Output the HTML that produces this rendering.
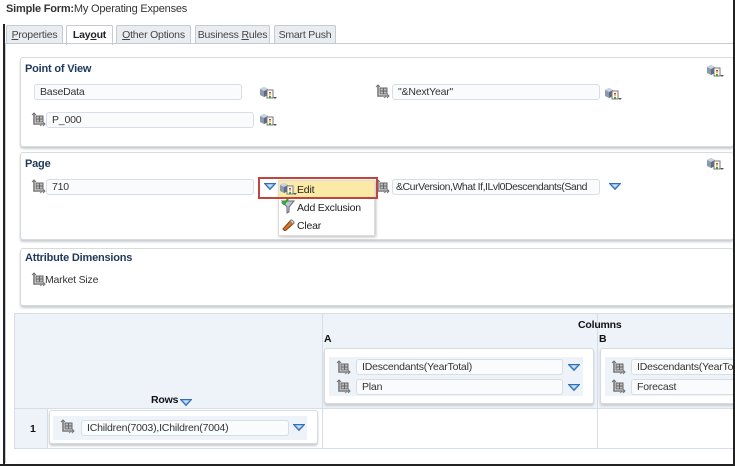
<!DOCTYPE html>
<html><head><meta charset="utf-8"><style>
*{margin:0;padding:0;box-sizing:border-box}
body{width:735px;height:466px;background:#fff;font-family:"Liberation Sans",Arial,sans-serif;font-size:10.5px;letter-spacing:-0.2px;color:#333;position:relative;overflow:hidden}
.a{position:absolute;white-space:nowrap}
.title{left:6px;top:3px;font-size:11px;color:#333}
.tab{top:25px;height:19px;border:1px solid #c5cbd3;border-bottom:none;background:#e9edf2;color:#444;padding:3px 0 0 0;text-align:center;border-radius:2px 2px 0 0}
.panel{border:1px solid #d6dbe0;border-radius:3px;background:#fff;box-shadow:0 2px 2px #c9ccd0}
.ph{font-weight:bold;color:#1d3a5b;font-size:11px}
.inp{height:16px;border:1px solid #d9dee4;border-radius:3px;background:#fafbfc;padding:1px 5px;color:#333;overflow:hidden}
</style></head><body>
<svg width="0" height="0" style="position:absolute">
<defs>
<g id="mem"><path d="M3 1v11h11" fill="none" stroke="#777" stroke-width="1.6"/><rect x="5" y="4" width="7" height="6" fill="#bbb" stroke="#666" stroke-width="1"/><path d="M5 7h7M8.5 4v6" stroke="#666"/><path d="M1 3l2-2 2 2M12 10l2 2-2 2" fill="none" stroke="#777"/><path d="M9 14l4-3" stroke="#888"/></g>
<g id="cube"><path d="M1 3l4-2 4 2v6l-4 2-4-2z" fill="#8a99ad"/><path d="M5 5v6l4-2V3z" fill="#5b6b80"/><path d="M1 3l4 2 4-2-4-2z" fill="#c9d3df"/><rect x="8" y="4" width="6" height="8" fill="#fff" stroke="#777"/><rect x="10" y="6" width="2" height="1.5" fill="#d33"/><rect x="10" y="8" width="2" height="1.5" fill="#ec3"/><rect x="10" y="10" width="2" height="1.5" fill="#3a3"/><path d="M14 11h4l-2 2z" fill="#555"/></g>
<g id="tri"><path d="M0.5 0.5h11l-5.5 6z" fill="#6fa6e0" stroke="#2d6fb8"/><path d="M3 1.5h6l-3 3z" fill="#cfe2f6"/></g>
</defs></svg>

<div class="a" style="left:3px;top:24px;width:2px;height:442px;background:#222"></div>
<div class="a title"><b>Simple Form:</b>My Operating Expenses</div>

<div class="a tab" style="left:6px;width:57px"><u>P</u>roperties</div>
<div class="a tab" style="left:66px;width:47px;background:#fff;font-weight:bold;color:#222;height:20px">Lay<u>o</u>ut</div>
<div class="a tab" style="left:116px;width:75px"><u>O</u>ther Options</div>
<div class="a tab" style="left:195px;width:75px">Business <u>R</u>ules</div>
<div class="a tab" style="left:274px;width:62px">Smart Push</div>
<div class="a" style="left:5px;top:43px;width:728px;height:1px;background:#c5cbd3"></div>
<div class="a" style="left:5px;top:43px;width:1px;height:420px;background:#c5cbd3"></div>

<!-- POV -->
<div class="a panel" style="left:20px;top:57px;width:714px;height:90px"></div>
<div class="a ph" style="left:25px;top:63px">Point of View</div>
<svg class="a" style="left:706px;top:64px" width="18" height="14"><use href="#cube"/></svg>
<div class="a inp" style="left:34px;top:84px;width:208px">BaseData</div>
<svg class="a" style="left:259px;top:86px" width="18" height="14"><use href="#cube"/></svg>
<svg class="a" style="left:375px;top:84px" width="16" height="16"><use href="#mem"/></svg>
<div class="a inp" style="left:392px;top:84px;width:208px">"&amp;NextYear"</div>
<svg class="a" style="left:604px;top:87px" width="18" height="14"><use href="#cube"/></svg>
<svg class="a" style="left:31px;top:112px" width="16" height="16"><use href="#mem"/></svg>
<div class="a inp" style="left:46px;top:112px;width:208px">P_000</div>
<svg class="a" style="left:259px;top:113px" width="18" height="14"><use href="#cube"/></svg>

<!-- Page -->
<div class="a panel" style="left:20px;top:152px;width:714px;height:88px"></div>
<div class="a ph" style="left:25px;top:158px">Page</div>
<svg class="a" style="left:706px;top:157px" width="18" height="14"><use href="#cube"/></svg>
<svg class="a" style="left:31px;top:179px" width="16" height="16"><use href="#mem"/></svg>
<div class="a inp" style="left:46px;top:179px;width:208px">710</div>
<svg class="a" style="left:264px;top:183px" width="12" height="8"><use href="#tri"/></svg>
<svg class="a" style="left:375px;top:179px" width="16" height="16"><use href="#mem"/></svg>
<div class="a inp" style="left:392px;top:179px;width:208px;padding-left:3px;letter-spacing:-0.45px">&amp;CurVersion,What If,ILvl0Descendants(Sand</div>
<svg class="a" style="left:609px;top:183px" width="12" height="8"><use href="#tri"/></svg>
<!-- menu -->
<div class="a" style="left:278px;top:180px;width:97px;height:56px;background:#fff;border:1px solid #dcdcdc;box-shadow:1px 1px 3px #bbb"></div>
<div class="a" style="left:279px;top:181px;width:95px;height:16px;background:#fbe9a6"></div>
<div class="a" style="left:258px;top:177px;width:120px;height:22px;border:2px solid #c0463c"></div>
<svg class="a" style="left:279px;top:182px" width="18" height="14"><use href="#cube"/></svg>
<div class="a" style="left:297px;top:184px;color:#222">Edit</div>
<svg class="a" style="left:281px;top:199px" width="14" height="15"><path d="M1 2h12l-5 6v5l-2 1V8z" fill="#bcc7d6" stroke="#667"/><path d="M1 3l2 2 4-5" fill="none" stroke="#2a2" stroke-width="2"/></svg>
<div class="a" style="left:297px;top:202px;color:#222">Add Exclusion</div>
<svg class="a" style="left:281px;top:217px" width="14" height="14"><path d="M2 12l8-9 3 3-9 8z" fill="#d7782a" stroke="#8a3a12"/><path d="M9 4l3 3 1-2-2-2z" fill="#eee" stroke="#888"/></svg>
<div class="a" style="left:297px;top:220px;color:#222">Clear</div>

<!-- Attribute -->
<div class="a panel" style="left:20px;top:248px;width:714px;height:58px"></div>
<div class="a ph" style="left:25px;top:252px">Attribute Dimensions</div>
<svg class="a" style="left:31px;top:272px" width="16" height="16"><use href="#mem"/></svg>
<div class="a" style="left:45px;top:274px">Market Size</div>

<!-- grid -->
<div class="a" style="left:14px;top:313px;width:721px;height:136px;background:#eef2f9;border:1px solid #d6dde8"></div>
<div class="a" style="left:14px;top:408px;width:721px;height:41px;background:#fff;border-top:1px solid #d6dde8;border-bottom:1px solid #d6dde8"></div>
<div class="a" style="left:14px;top:408px;width:34px;height:41px;background:#eef2f9;border:1px solid #d6dde8"></div>
<div class="a" style="left:322px;top:313px;width:1px;height:136px;background:#d6dde8"></div>
<div class="a" style="left:597px;top:313px;width:1px;height:136px;background:#d6dde8"></div>
<div class="a" style="left:578px;top:319px;font-weight:bold;color:#111">Columns</div>
<div class="a" style="left:324px;top:333px;font-weight:bold;color:#111">A</div>
<div class="a" style="left:599px;top:333px;font-weight:bold;color:#111">B</div>
<div class="a" style="left:151px;top:394px;font-weight:bold;color:#111">Rows</div>
<svg class="a" style="left:180px;top:399px" width="12" height="8"><use href="#tri"/></svg>
<div class="a" style="left:30px;top:423px;font-weight:bold;color:#111">1</div>
<!-- col A card -->
<div class="a panel" style="left:324px;top:348px;width:270px;height:56px"></div>
<div class="a" style="left:329px;top:357px;width:254px;height:39px;background:#eef2f9"></div>
<svg class="a" style="left:336px;top:360px" width="16" height="16"><use href="#mem"/></svg>
<div class="a inp" style="left:356px;top:359px;width:207px">IDescendants(YearTotal)</div>
<svg class="a" style="left:568px;top:364px" width="12" height="8"><use href="#tri"/></svg>
<svg class="a" style="left:336px;top:379px" width="16" height="16"><use href="#mem"/></svg>
<div class="a inp" style="left:356px;top:379px;width:207px">Plan</div>
<svg class="a" style="left:568px;top:384px" width="12" height="8"><use href="#tri"/></svg>
<!-- col B card -->
<div class="a panel" style="left:600px;top:348px;width:140px;height:56px"></div>
<div class="a" style="left:605px;top:357px;width:130px;height:39px;background:#eef2f9"></div>
<svg class="a" style="left:611px;top:360px" width="16" height="16"><use href="#mem"/></svg>
<div class="a inp" style="left:631px;top:359px;width:110px">IDescendants(YearTotal)</div>
<svg class="a" style="left:611px;top:379px" width="16" height="16"><use href="#mem"/></svg>
<div class="a inp" style="left:631px;top:379px;width:110px">Forecast</div>
<!-- row card -->
<div class="a panel" style="left:49px;top:410px;width:269px;height:34px"></div>
<div class="a" style="left:53px;top:416px;width:254px;height:24px;background:#eef2f9"></div>
<svg class="a" style="left:60px;top:419px" width="16" height="16"><use href="#mem"/></svg>
<div class="a inp" style="left:81px;top:420px;width:208px">IChildren(7003),IChildren(7004)</div>
<svg class="a" style="left:293px;top:424px" width="12" height="8"><use href="#tri"/></svg>
<div class="a" style="left:0;top:464px;width:735px;height:2px;background:#222"></div>
<div class="a" style="left:733px;top:0;width:2px;height:466px;background:#222"></div>
</body></html>
